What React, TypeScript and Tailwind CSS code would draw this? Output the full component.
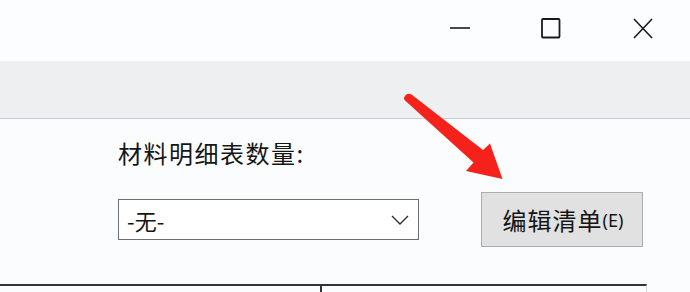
import React from "react";

const cjk = { fontFamily: '"Noto Sans CJK SC", "Noto Sans", sans-serif' };

export default function App() {
  return (
    <div className="relative w-[690px] h-[292px] overflow-hidden bg-[#fbfcfe] text-[#151515]" style={cjk}>
      {/* title bar */}
      <div className="h-[61px] bg-[#fcfdff] flex items-start justify-end">
        <div className="flex items-center h-[56px] pr-[37px]">
          <div className="w-[60px] flex justify-end">
            <svg width="20" height="20" viewBox="0 0 20 20">
              <line x1="0" y1="10" x2="20" y2="10" stroke="#1a1a1a" strokeWidth="1.6" />
            </svg>
          </div>
          <div className="ml-[71px]">
            <svg width="20" height="21" viewBox="0 0 20 21">
              <rect x="1" y="1" width="17.5" height="18.5" rx="1" fill="none" stroke="#1a1a1a" strokeWidth="1.8" />
            </svg>
          </div>
          <div className="ml-[72px]">
            <svg width="20" height="21" viewBox="0 0 20 21">
              <path d="M1 1 L19 20 M19 1 L1 20" stroke="#1a1a1a" strokeWidth="1.6" fill="none" />
            </svg>
          </div>
        </div>
      </div>
      {/* toolbar band */}
      <div className="h-[58px] bg-[#eeeff1] border-b border-[#c9cbce]" />
      {/* body */}
      <div className="pl-[118px] pt-[22px]">
        <div className="text-[24px] leading-[24px] tracking-[1.5px]">材料明细表数量:</div>
        <div className="flex items-center mt-[27px] h-[55px]">
          <div className="w-[301px] h-[41px] border border-[#6e6e6e] bg-white flex items-center justify-between pl-[8px] pr-[9px]">
            <span className="text-[22px] leading-none">-无-</span>
            <svg width="18" height="10" viewBox="0 0 18 10">
              <path d="M1 1 L9 9 L17 1" fill="none" stroke="#2a2a2a" strokeWidth="1.3" />
            </svg>
          </div>
          <div className="ml-[62px] w-[162px] h-[55px] border border-[#acacac] bg-[#e1e1e1] flex items-center justify-center pl-[2px]">
            <span className="text-[24px] leading-none tracking-[1px]">编辑清单</span>
            <span className="text-[18px] leading-none" style={{ fontFamily: '"Noto Sans", sans-serif' }}>(E)</span>
          </div>
        </div>
      </div>
      {/* bottom table header */}
      <div className="absolute left-0 top-[284px] w-[647px] h-[8px] flex border-t-2 border-[#333] border-r border-r-[#d8d8d8]">
        <div className="w-[322px] border-r-2 border-[#333]" />
        <div className="flex-1" />
      </div>
      {/* red arrow annotation */}
      <svg className="absolute left-0 top-0" width="690" height="292" viewBox="0 0 690 292">
        <path
          d="M405 96 Q407.5 92.5 411.5 94.5 L483 150 L490 143.5 L502.5 179 L466 171 L473.5 162.5 L404.5 100 Q403 98 405 96 Z"
          fill="#f5221b"
        />
      </svg>
    </div>
  );
}
